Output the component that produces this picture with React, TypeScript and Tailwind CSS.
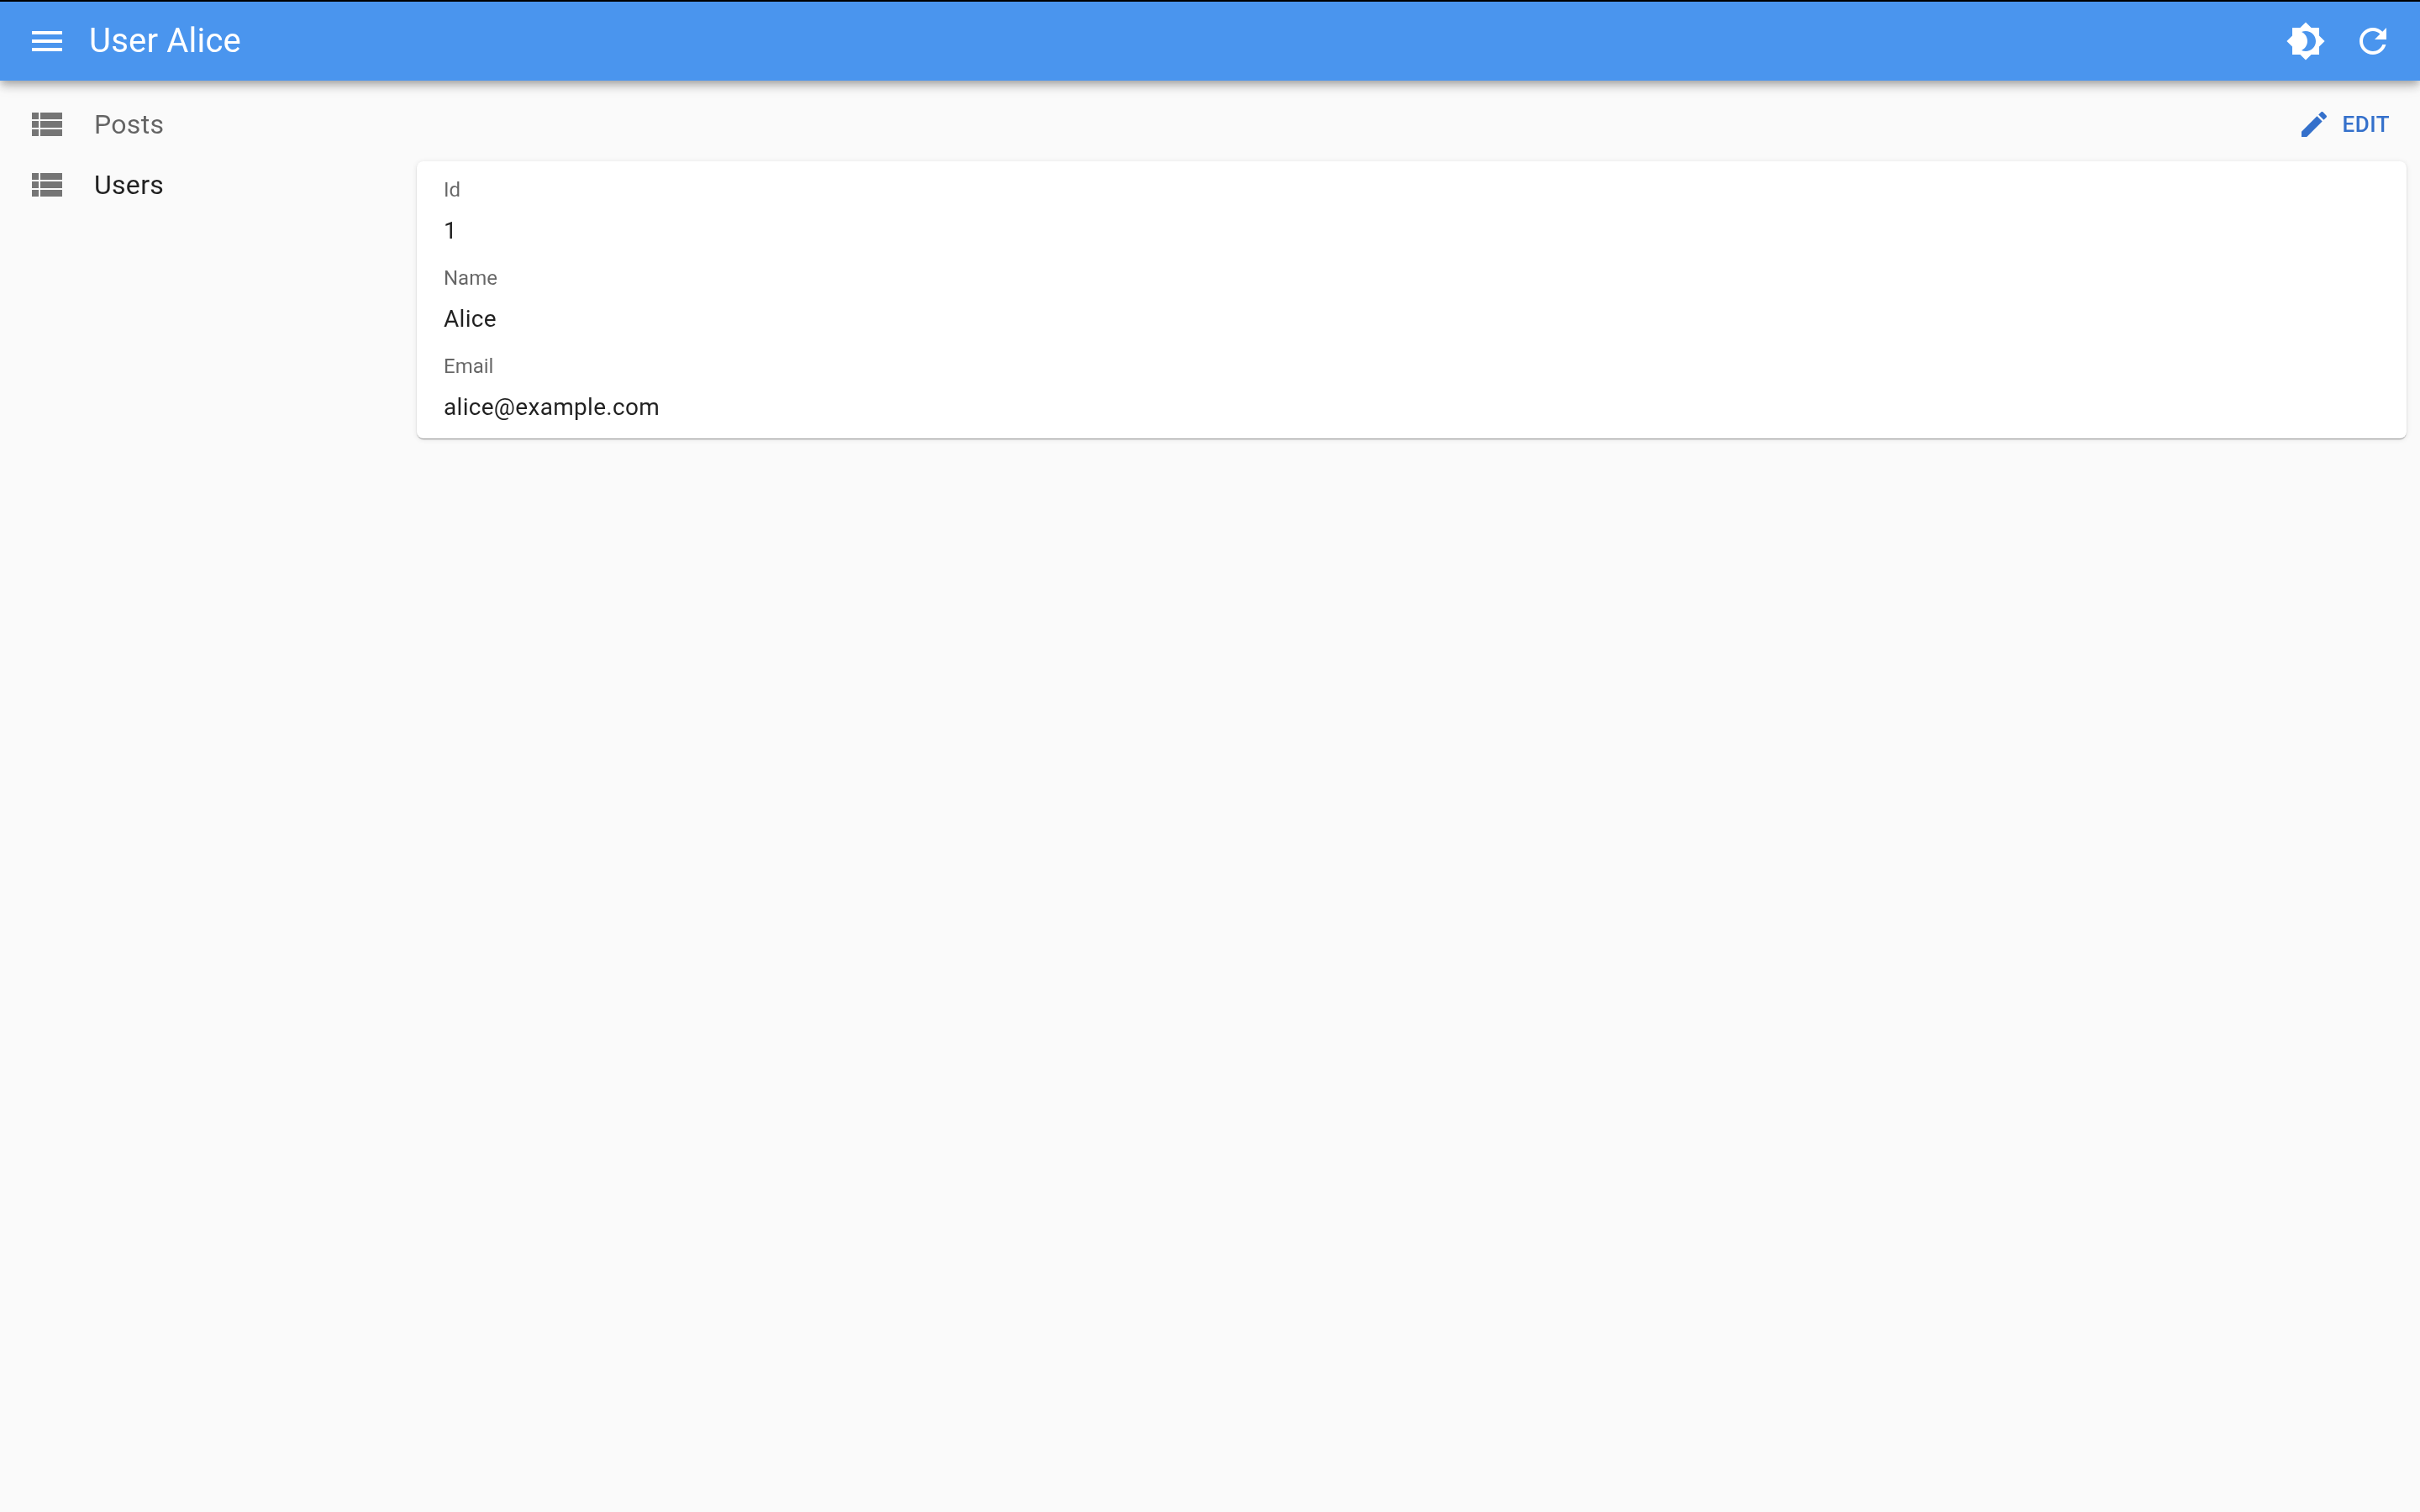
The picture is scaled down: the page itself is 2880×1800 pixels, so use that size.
const MENU = "M3 18h18v-2H3v2zm0-5h18v-2H3v2zm0-7v2h18V6H3z";
const VIEW_LIST = "M3 14h4v-4H3v4zm0 5h4v-4H3v4zM3 9h4V5H3v4zm5 5h13v-4H8v4zm0 5h13v-4H8v4zM8 5v4h13V5H8z";
const BRIGHTNESS = "M20 8.69V4h-4.69L12 .69 8.69 4H4v4.69L.69 12 4 15.31V20h4.69L12 23.31 15.31 20H20v-4.69L23.31 12 20 8.69zM12 18c-.89 0-1.74-.2-2.5-.55C11.56 16.5 13 14.42 13 12s-1.44-4.5-3.5-5.45C10.26 6.2 11.11 6 12 6c3.31 0 6 2.69 6 6s-2.69 6-6 6z";
const REFRESH = "M17.65 6.35C16.2 4.9 14.21 4 12 4c-4.42 0-7.99 3.58-7.99 8s3.57 8 7.99 8c3.73 0 6.84-2.55 7.73-6h-2.08c-.82 2.33-3.04 4-5.65 4-3.31 0-6-2.69-6-6s2.69-6 6-6c1.66 0 3.14.69 4.22 1.78L13 11h7V4l-2.35 2.35z";
const PENCIL = "M3 17.25V21h3.75L17.81 9.94l-3.75-3.75L3 17.25zM20.71 7.04c.39-.39.39-1.02 0-1.41l-2.34-2.34c-.39-.39-1.02-.39-1.41 0l-1.83 1.83 3.75 3.75 1.83-1.83z";

function Icon({ d, className }: { d: string; className: string }) {
  return (
    <svg viewBox="0 0 24 24" fill="currentColor" className={className}>
      <path d={d} />
    </svg>
  );
}

function MenuLink({ label, active }: { label: string; active?: boolean }) {
  return (
    <div className="flex h-[72px] items-center pl-8">
      <Icon d={VIEW_LIST} className="h-12 w-12 shrink-0 text-[#757575]" />
      <span
        className={`ml-8 text-[32px] leading-[48px] tracking-[0.3px] ${active ? "text-black/[.87]" : "text-black/[.6]"}`}
      >
        {label}
      </span>
    </div>
  );
}

function Field({ label, value }: { label: string; value: string }) {
  return (
    <div className="h-[105px] pt-[22px]">
      <div className="text-[24px] leading-[24px] text-black/[.6]">{label}</div>
      <div className="mt-[17px] text-[28px] leading-[40px] tracking-[0.3px] text-black/[.87]">{value}</div>
    </div>
  );
}

export default function App() {
  return (
    <div className="flex min-h-[1800px] flex-col bg-[#fafafa] font-['Roboto',sans-serif] antialiased">
      <header className="relative z-10 flex h-24 items-center border-t-2 border-black bg-[#4a95ee] pl-8 pr-4 text-white shadow-[0_4px_8px_-2px_rgba(0,0,0,0.2),0_8px_10px_0_rgba(0,0,0,0.14),0_2px_20px_0_rgba(0,0,0,0.12)]">
        <Icon d={MENU} className="h-12 w-12 shrink-0" />
        <h1 className="ml-[26px] flex-1 text-[40px] leading-[56px] tracking-[0.2px] will-change-transform">User Alice</h1>
        <button className="p-4">
          <Icon d={BRIGHTNESS} className="h-12 w-12" />
        </button>
        <button className="p-4">
          <Icon d={REFRESH} className="h-12 w-12" />
        </button>
      </header>

      <div className="flex flex-1">
        <nav className="w-[496px] shrink-0 pt-4 will-change-transform">
          <MenuLink label="Posts" />
          <MenuLink label="Users" active />
        </nav>

        <main className="flex-1 pr-4 will-change-transform">
          <div className="flex h-24 items-center justify-end pr-5 pt-2 text-[#3470cb]">
            <Icon d={PENCIL} className="h-10 w-10" />
            <span className="ml-[13px] text-[26px] font-medium leading-none tracking-[0.5px]">EDIT</span>
          </div>
          <section className="h-[330px] rounded-lg bg-white px-8 shadow-[0_2px_1px_-1px_rgba(0,0,0,0.3),0_1px_2px_0_rgba(0,0,0,0.14),0_1px_6px_0_rgba(0,0,0,0.1)]">
            <Field label="Id" value="1" />
            <Field label="Name" value="Alice" />
            <Field label="Email" value="alice@example.com" />
          </section>
        </main>
      </div>
    </div>
  );
}
